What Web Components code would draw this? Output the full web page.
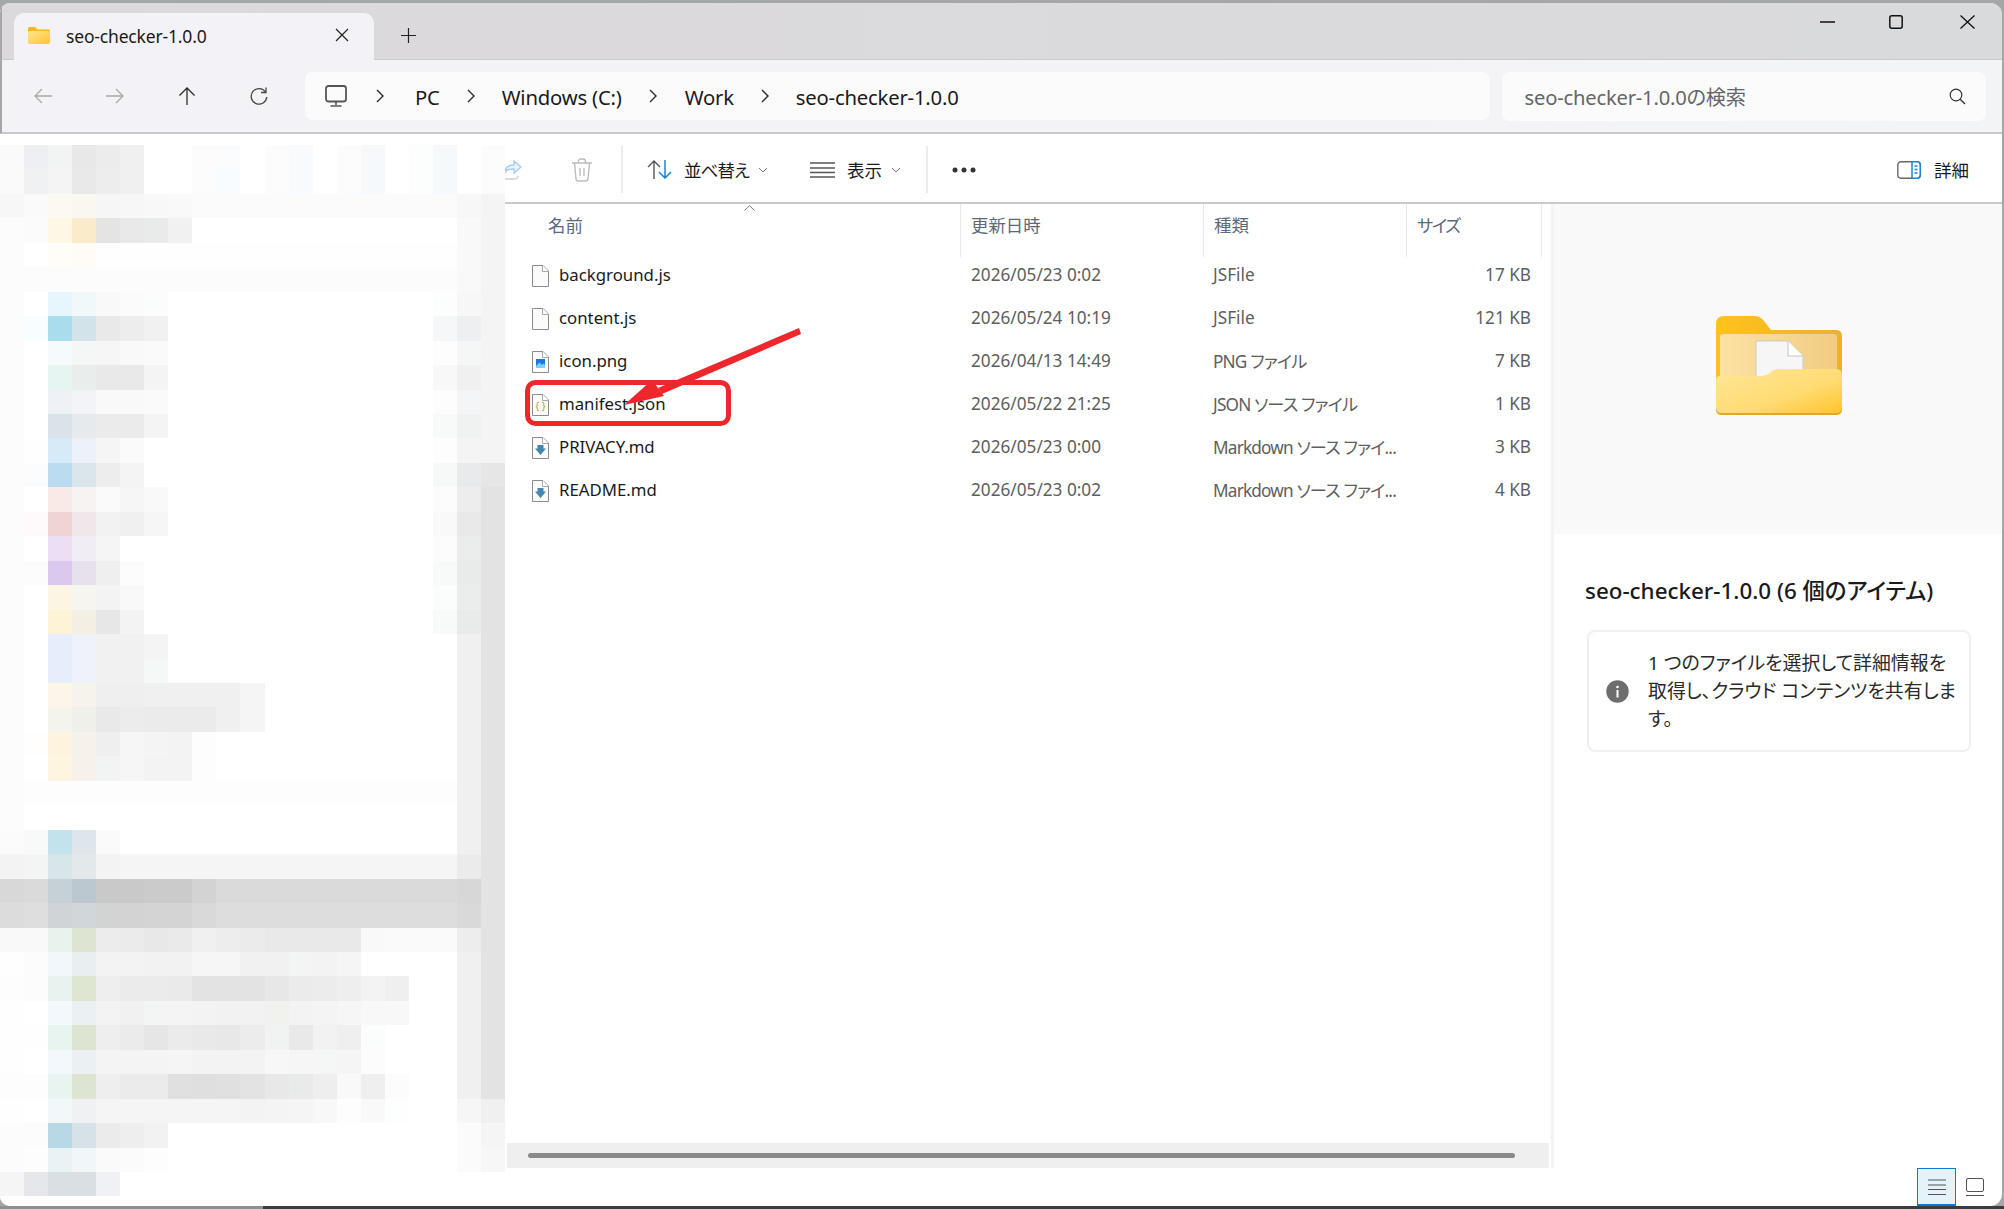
<!DOCTYPE html>
<html lang="ja">
<head>
<meta charset="utf-8">
<title>seo-checker-1.0.0</title>
<style>
html, body { margin: 0; height: 100%; }
body {
  width: 2004px; height: 1209px; overflow: hidden; background: #a4a6a8;
  font-family: "Noto Sans", "Noto Sans CJK JP", sans-serif;
  font-feature-settings: "palt";
  color: #1a1a1a;
}
</style>
</head>
<body>
<fx-window>
  <fx-titlebar slot="title">seo-checker-1.0.0</fx-titlebar>
  <fx-navbar slot="nav"></fx-navbar>
  <fx-mosaic slot="side"></fx-mosaic>
  <fx-toolbar slot="tools"></fx-toolbar>
  <fx-filelist slot="list">
    <fx-file icon="doc" date="2026/05/23 0:02" kind="JSFile" size="17 KB">background.js</fx-file>
    <fx-file icon="doc" date="2026/05/24 10:19" kind="JSFile" size="121 KB">content.js</fx-file>
    <fx-file icon="png" date="2026/04/13 14:49" kind="PNG ファイル" size="7 KB">icon.png</fx-file>
    <fx-file icon="json" date="2026/05/22 21:25" kind="JSON ソース ファイル" size="1 KB">manifest.json</fx-file>
    <fx-file icon="md" date="2026/05/23 0:00" kind="Markdown ソース ファイ..." size="3 KB">PRIVACY.md</fx-file>
    <fx-file icon="md" date="2026/05/23 0:02" kind="Markdown ソース ファイ..." size="4 KB">README.md</fx-file>
  </fx-filelist>
  <fx-details slot="details"></fx-details>
  <fx-viewswitch slot="status"></fx-viewswitch>
</fx-window>
<fx-deskstrip></fx-deskstrip>
<fx-annotation></fx-annotation>

<script>
const FOLDER_SMALL = `<svg width="22" height="17" viewBox="0 0 22 17">
  <defs><linearGradient id="fs" x1="0" y1="0" x2="1" y2="1"><stop offset="0" stop-color="#ffe58f"/><stop offset="1" stop-color="#fdc52f"/></linearGradient></defs>
  <path d="M0 2Q0 0 2 0H7L9.5 2.5H21Q22 2.5 22 4V8H0Z" fill="#f6b622"/>
  <path d="M0 5.5Q0 4 1.5 4H20.5Q22 4 22 5.5V15Q22 17 20 17H2Q0 17 0 15Z" fill="url(#fs)"/>
</svg>`

class FxWindow extends HTMLElement {
  constructor(){
    super()
    this.attachShadow({mode: 'open'})
    this.shadowRoot.innerHTML = `
    <style>
      :host{ display:flex; flex-direction:column; width:2002px; height:1203px; margin-top:3px; background:#fff; border-radius:10px 12px 12px 10px; overflow:hidden; }
      .work{ flex:1; display:flex; min-height:0; }
      .side{ width:505px; flex:none; background:#fff; padding-top:11px; box-sizing:border-box; }
      .main{ flex:1; min-width:0; display:flex; flex-direction:column; }
      .panes{ flex:1; min-height:0; display:flex; }
    </style>
    <slot name="title"></slot>
    <slot name="nav"></slot>
    <div class="work">
      <div class="side"><slot name="side"></slot></div>
      <div class="main">
        <slot name="tools"></slot>
        <div class="panes"><slot name="list"></slot><slot name="details"></slot></div>
        <slot name="status"></slot>
      </div>
    </div>`
  }
}

class FxTitlebar extends HTMLElement {
  constructor(){
    super()
    this.attachShadow({mode: 'open'})
    this.shadowRoot.innerHTML = `
    <style>
      :host{ display:flex; align-items:flex-end; height:57px; box-sizing:border-box; border-left:2px solid #a6a6a6; border-bottom:1px solid #c9c9cb; background:linear-gradient(90deg,#dcd9dd,#d9dadb); padding-left:12px; padding-right:27px; }
      .tab{ display:flex; align-items:center; width:360px; height:47px; margin-bottom:-1px; background:#f3f2f6; border-radius:10px 10px 0 0; padding:0 25px 2px 14px; box-sizing:border-box; }
      .tab svg:first-child{ flex:none; }
      .label{ margin-left:16px; font-size:17.5px; letter-spacing:-.17px; padding-top:1px; }
      .close{ margin-left:auto; margin-bottom:2px; }
      .plus{ margin:0 0 16px 27px; }
      .ctl{ margin-left:auto; align-self:flex-start; margin-top:12px; display:flex; align-items:center; }
    </style>
    <div class="tab">
      ${FOLDER_SMALL}
      <span class="label"><slot></slot></span>
      <svg class="close" width="14" height="14" viewBox="0 0 14 14"><path d="M1 1 13 13M13 1 1 13" stroke="#222" stroke-width="1.2"/></svg>
    </div>
    <svg class="plus" width="15" height="15" viewBox="0 0 15 15"><path d="M7.5 0V15M0 7.5H15" stroke="#222" stroke-width="1.2"/></svg>
    <div class="ctl">
      <svg width="15" height="14" viewBox="0 0 15 14"><path d="M0 7H15" stroke="#111" stroke-width="1.3"/></svg>
      <svg style="margin-left:54px" width="14" height="14" viewBox="0 0 14 14"><rect x=".8" y=".8" width="12.4" height="12.4" rx="2" fill="none" stroke="#111" stroke-width="1.5"/></svg>
      <svg style="margin-left:57px" width="15" height="14" viewBox="0 0 15 14"><path d="M.5 .5 14.5 13.5M14.5 .5 .5 13.5" stroke="#111" stroke-width="1.3"/></svg>
    </div>`
  }
}

class FxNavbar extends HTMLElement {
  constructor(){
    super()
    this.attachShadow({mode: 'open'})
    const chev = `<svg class="chev" width="8" height="14" viewBox="0 0 8 14"><path d="M1 1 7 7 1 13" fill="none" stroke="#2a2a2a" stroke-width="1.4"/></svg>`
    this.shadowRoot.innerHTML = `
    <style>
      :host{ display:flex; align-items:center; height:74px; box-sizing:border-box; border-left:2px solid #a6a6a6; border-bottom:2px solid #c9c8cc; background:linear-gradient(90deg,#f3f2f6,#f3f4f5); padding-left:5px; }
      .btn{ width:72px; display:flex; justify-content:center; align-items:center; }
      .addr{ margin-left:9.5px; width:1185px; height:48px; background:#fbfbfb; border-radius:8px; display:flex; align-items:center; padding-left:20.5px; box-sizing:border-box; font-size:20.3px; letter-spacing:-.2px; }
      .addr span{ margin-left:28px; padding-top:2px; }
      .addr .chev{ margin-left:27px; }
      .addr .c1{ margin-left:29px; }
      .addr .pc{ margin-left:31px; }
      .addr .drive{ margin-left:27px; }
      .addr .leaf{ margin-left:27px; }
      .search{ margin-left:12.5px; width:484px; height:49px; background:#fbfbfb; border-radius:8px; display:flex; align-items:center; justify-content:space-between; padding:0 20px 0 22.5px; box-sizing:border-box; font-size:20.2px; letter-spacing:-.2px; color:#666; }
      .search span{ padding-top:1px; }
    </style>
    <div class="btn"><svg width="18" height="16" viewBox="0 0 18 16"><path d="M18 8H1M8 1 1 8 8 15" fill="none" stroke="#a9a9a9" stroke-width="1.3"/></svg></div>
    <div class="btn"><svg width="18" height="16" viewBox="0 0 18 16"><path d="M0 8H17M10 1 17 8 10 15" fill="none" stroke="#a9a9a9" stroke-width="1.3"/></svg></div>
    <div class="btn"><svg width="18" height="18" viewBox="0 0 18 18"><path d="M9 18V1M1.500 8.500 9 1 16.500 8.500" fill="none" stroke="#2b2b2b" stroke-width="1.3"/></svg></div>
    <div class="btn"><svg width="18" height="18" viewBox="0 0 18 18"><path d="M15.500 5A7.800 7.800 0 1 0 16.800 10" fill="none" stroke="#444" stroke-width="1.300"/><path d="M16 .5V5.500H11" fill="none" stroke="#444" stroke-width="1.300"/></svg></div>
    <div class="addr">
      <svg width="22" height="22" viewBox="0 0 22 22"><rect x="1" y="1" width="20" height="15.500" rx="2.500" fill="none" stroke="#555" stroke-width="1.800"/><path d="M11 17V20M5.500 21H16.500" stroke="#555" stroke-width="1.600"/></svg>
      ${chev.replace('class="chev"', 'class="chev c1"')}<span class="pc">PC</span>${chev}<span class="drive">Windows (C:)</span>${chev}<span>Work</span>${chev}<span class="leaf">seo-checker-1.0.0</span>
    </div>
    <div class="search">
      <span>seo-checker-1.0.0の検索</span>
      <svg width="17" height="17" viewBox="0 0 17 17"><circle cx="7" cy="7" r="5.800" fill="none" stroke="#333" stroke-width="1.200"/><path d="M11.200 11.200 16 16" stroke="#333" stroke-width="1.400"/></svg>
    </div>`
  }
}

// sidebar is blurred in the source: one flat colour per block
const MOSAIC_ROWS = [
  "fafafa eeeff2 f2f3f3 e8e8e8 ececec f0f0f0 fff fff fcfcfd fbfcfe fff fcfcfc f8fbfe fff fcfcfc f6f9fc fff fcfdfd|f6f9fc fff fcfcfc",
  "fafafa f0f1f3 f3f4f3 e9e9e9 ededed f0f0f0 fff fff fcfcfd f9fcfe fff fcfcfc f8fbfe fff fcfcfc f6f9fc fff fcfdfd|f6f9fc fff fcfcfc",
  "f7f7f7 fafafa fbf9f2 f9f7ef f6f6f6 f7f7f7 f8f8f8 f9f9f9 fbfbfb*11|f7f7f7 f4f4f4",
  "fcfcfc fbfbfb fff7e5 faeccb e4e4e3 e9e9e9 e9eaea f0f1f0|f9f9f9 f4f4f4",
  "fcfcfc fff fffdf8 fffcf7 fefefe*15|f9f9f9 f4f4f4",
  "fcfcfc*19|f9f9f9 f4f4f4",
  "fcfcfc fff e6f6fc f1f8f9 f9f9f9 fbfbfb fbfcfc|fcfdfd f7f7f7 f4f4f4",
  "fcfcfc f8feff a9dcec d2e4ea e9e9e9 ededed f1f1f1|f6f7f9 eeeff1 f4f4f4",
  "fcfcfc fff f5fbfd f5f7f7 f6f6f6 f9f9f9 fafafa|fdfdfd f5f7f6 f4f4f4",
  "fcfcfc fff e5f6f2 e9eeec e9e9e9 e9e9e9 f4f4f4|f8f8f8 f0f0f0 f4f4f4",
  "fcfcfc fff eef2f6 f3f4f7 f9f9f9 f9f9f9 fafafa|fdfdfd f4f5f6 f4f4f4",
  "fcfcfc fff dae2ea e6eaed ebebeb ebebeb f3f4f3|f8f9f9 f0f1f1 f4f4f4",
  "fcfcfc fefefe d6eaf8 ecf2f7 f5f5f5 fafafa|fdfdfd f4f4f4 f4f4f4",
  "fcfcfc fafcfe bbdcf0 dae6ec ededed f4f4f4|f7f9f9 e9eaeb e6e6e6",
  "fcfcfc fff f9eae8 f7f3f3 fafafa f6f6f6 f9f9f9|fcfcfc ecedec e3e3e3",
  "fcfcfc fef9fb f0d3d5 f1e6ea f2f2f2 f0f0f0 f6f6f6|f9f9f9 e8e9e8 e3e3e3",
  "fcfcfc fff eadff5 f0edf5 f5f5f5|fcfcfc ebecec e3e3e3",
  "fcfcfc fcfcfc dbc8ee e7e1ee efefef fcfcfc|f8f9f9 e9ebeb e3e3e3",
  "fcfcfc fff fdf5e4 f6f5ef f3f3f3 f9f9f9|fbfcfc ebedec e3e3e3",
  "fcfcfc fff fef3d6 f3efe2 e7e7e7 f3f3f3|f8f9f9 e9ebeb e3e3e3",
  "fcfcfc fff e7eefb eff2f8 f1f1f1 f1f1f1 f4f4f4|f0f0f0 e3e3e3",
  "fcfcfc fff e7eefb eff2f8 f1f1f1 f1f1f1 f4f8f6|f0f0f0 e3e3e3",
  "fcfcfc fff fdf6e8 f5f3ec efefef efefef f0f0f0 f0f0f0 f0f0f0 f0f0f0 f5f5f5|f0f0f0 e3e3e3",
  "fcfcfc fff f3f5ec f0f0ea e9e9e9 ececec ebebeb ebebeb ebebeb f0f0f0 f5f5f5|f0f0f0 e3e3e3",
  "fcfcfc fffefc fdf3de f6f1ea efefef f6f6f6 f4f4f4 f3f3f3 fdfdfd|f0f0f0 e3e3e3",
  "fcfcfc fff fdf5df f6f1ea f2f4f3 f6f6f6 f3f3f3 f3f3f3 fdfdfd|f0f0f0 e3e3e3",
  "fcfcfc fdfdfd*18|f0f0f0 e3e3e3",
  "fcfcfc|f0f0f0 e3e3e3",
  "fbfbfb f8faf9 c2e2ec dee6ec fafafa|f0f0f0 e3e3e3",
  "f3f3f3 f3f5f4 d6e6eb e3e8eb f3f3f3 f5f5f5*14|ebebeb e3e3e3",
  "d8d8d8 dadada c5d0d7 bbc8d0 c8c9c8 c9c9c9 cbcbcb cbcbcb d3d3d3 dadada*10|d7d7d7 e3e3e3",
  "dcdcdc dedede d0d4d6 d1d6db d2d4d3 d3d3d3 d4d4d4 d4d4d4 d9d9d9 dddddd*10|d9d9d9 e3e3e3",
  "f9f9f9 f9f9f9 e8f3ed dde4d2 ececec ebebeb e8e8e8 eaeaea f0f0f0 ededed ebebeb e9e9e9 e9e9e9 e9e9e9 e9e9e9 f9f9f9 fafafa fafafa fafafa|ededed e3e3e3",
  "fefefe fcfcfc f1f7fa e9eef0 f3f3f3 f3f3f3 f2f2f2 f2f2f2 f6f6f6 f6f6f6 f1f1f1 f1f1f1 f2f5f3 f3f3f3 f5f5f5|f0f0f0 e3e3e3",
  "fdfdfd fcfcfc e8f3ef dee5d1 eeeeee ebebeb ebebeb eaeaea e3e3e3 e3e3e3 e3e3e3 e7e7e7 ebebeb ececec eeeeee f3f3f3 efefef|f0f0f0 e3e3e3",
  "fefefe fff f2f8fb ebf0f2 f3f3f3 f1f1f1 f3f4f4 f4f4f4 f3f3f3 f2f2f2 f2f2f2 f1f1ee f3f3f3 f4f4f4 f6f6f6 f8f8f8 f8f8f8|f0f0f0 e3e3e3",
  "fefefe fefefe e8f4ef dde4d2 eeeeee ebebeb e6e6e6 ebebeb e9e9e9 e8e8e8 ececec f1f3f2 e9e9e9 f2f2f2 efefef fbfdfc|f0f0f0 e3e3e3",
  "fefefe fff f2f8fb ebf0f2 f4f4f4 f4f4f4 f4f4f4 f5f5f5 f3f3f3 f3f3f3 f3f3f3 f7f7f7 f6f6f6 f5f7f6 f5f5f5 fcfcfc|f0f0f0 e3e3e3",
  "fdfdfd fdfdfd e8f4ef dde4d2 eeeeee ebebeb ebebeb e0e0e0 dfdfdf e0e0e0 e3e3e3 e8e8e8 e8ebea eeeeee f9f9f9 efefef fcfcfc|f0f0f0 e3e3e3",
  "fefefe fff f2f8fa f0f1f3 f5f5f5 f5f5f5 f5f5f5 f5f5f5 f5f5f5 f5f5f5 f3f3f3 f4f4f4 f5f5f5 f8f8f8 fdfdfd f9f9f9 fdfefe|f6f6f6 f0f0f0",
  "fcfcfc fbfcfb b7d8e4 d7e2e8 ebebeb eeeeee f2f2f2|fbfbfb f5f5f5",
  "fcfcfc fdfdfd e9f2f5 f1f6f9 fafafa fbfbfb fdfdfd|fbfbfb f7f7f7",
  "f5f5f5 e6e7eb dadfe3 dadfe3 f0f1f5|"
]

class FxMosaic extends HTMLElement {
  constructor(){
    super()
    this.attachShadow({mode: 'open'})
    let cells = ""
    for(const row of MOSAIC_ROWS){
      for(const c of this.expandRow(row)) cells += `<i style="background:#${c}"></i>`
    }
    this.shadowRoot.innerHTML = `
    <style>
      :host{ display:grid; grid-template-columns:repeat(21,24.05px); grid-auto-rows:24.46px; }
    </style>${cells}`
  }

  expandRow(row){
    const parts = row.split("|")
    const spread = s => s.trim() === "" ? [] : s.trim().split(/\s+/).flatMap(t => {
      const [c, n] = t.split("*")
      return Array(Number(n || 1)).fill(c)
    })
    const left = spread(parts[0])
    const right = spread(parts[1] || "")
    const mid = Array(21 - left.length - right.length).fill("fff")
    return [...left, ...mid, ...right]
  }
}

class FxToolbar extends HTMLElement {
  constructor(){
    super()
    this.attachShadow({mode: 'open'})
    const caret = `<svg width="10" height="6" viewBox="0 0 10 6"><path d="M1 1 5 5 9 1" fill="none" stroke="#777" stroke-width="1"/></svg>`
    this.shadowRoot.innerHTML = `
    <style>
      :host{ display:flex; align-items:center; height:70px; padding-top:3px; box-sizing:border-box; border-bottom:2px solid #c9c9cb; font-size:17.5px; padding-right:33px; overflow:hidden; }
      .sep{ width:2px; height:47px; background:#ebebeb; flex:none; }
      .right{ margin-left:auto; display:flex; align-items:center; gap:13px; }
    </style>
    <svg style="flex:none" width="17" height="21" viewBox="0 0 17 21"><path d="M-2 13H2M-2 20H9Q13 20 13 17" fill="none" stroke="#cfcfcf" stroke-width="1.300"/><path d="M0 12Q1 6 9 6V2L16 8 9 14V10Q3 10 0 12Z" fill="#e9f3fc" stroke="#a3cdf1" stroke-width="1.300"/></svg>
    <svg style="margin-left:49px;flex:none" width="22" height="24" viewBox="0 0 22 24"><path d="M1 5H21M7.500 5V3.500Q7.500 1 10 1H12Q14.500 1 14.500 3.500V5M3.500 5 5 21Q5.200 23 7.500 23H14.500Q16.800 23 17 21L18.500 5M9 10V18M13 10V18" fill="none" stroke="#bcbcbc" stroke-width="1.400"/></svg>
    <div class="sep" style="margin-left:28px"></div>
    <svg style="margin-left:24px;flex:none" width="25" height="19" viewBox="0 0 25 19"><path d="M7 19V1M1 7 7 1 13 7" fill="none" stroke="#555" stroke-width="1.400"/><path d="M18 0V18M12 12 18 18 24 12" fill="none" stroke="#1a84d8" stroke-width="1.500"/></svg>
    <span style="margin-left:12px;width:65px;white-space:nowrap;letter-spacing:-.9px">並べ替え</span>
    <span style="margin-left:9px;display:flex">${caret}</span>
    <svg style="margin-left:42px;flex:none" width="25" height="16" viewBox="0 0 25 16"><path d="M0 1H25M0 6H25M0 10.500H25M0 15H25" stroke="#555" stroke-width="1.300"/></svg>
    <span style="margin-left:12px;width:35px;white-space:nowrap">表示</span>
    <span style="margin-left:9px;display:flex">${caret}</span>
    <div class="sep" style="margin-left:25px"></div>
    <svg style="margin-left:24px;flex:none" width="24" height="6" viewBox="0 0 24 6"><circle cx="3" cy="3" r="2.500" fill="#333"/><circle cx="12" cy="3" r="2.500" fill="#333"/><circle cx="21" cy="3" r="2.500" fill="#333"/></svg>
    <div class="right">
      <svg width="24" height="18" viewBox="0 0 24 18"><rect x=".8" y=".8" width="22.400" height="16.400" rx="3" fill="#fff" stroke="#666" stroke-width="1.400"/><path d="M15 .8H20Q23.200 .8 23.200 4V14Q23.200 17.200 20 17.200H15Z" fill="#fff" stroke="#1a84d8" stroke-width="1.500"/><path d="M17.500 5H20.500M17.500 8.500H20.500M17.500 12H20.500" stroke="#1a84d8" stroke-width="1.300"/></svg>
      <span>詳細</span>
    </div>`
  }
}

class FxFilelist extends HTMLElement {
  constructor(){
    super()
    this.attachShadow({mode: 'open'})
    this.shadowRoot.innerHTML = `
    <style>
      :host{ display:flex; flex-direction:column; width:1046px; height:100%; box-sizing:border-box; }
      .head{ display:grid; grid-template-columns:456px 243px 203px 135px; height:53px; margin-bottom:-3px; font-size:17.4px; color:#5a6a7d; }
      .head div{ border-right:1px solid #e8e8e8; padding:7.5px 0 0 10px; position:relative; }
      .head div:first-child{ padding-left:43px; }
      .head div:last-child{ letter-spacing:-1.6px; }
      .head svg{ position:absolute; left:239px; top:1px; }
      .rows{ flex:1; }
      .bar{ height:25px; margin:0 2px; background:#efefef; display:flex; align-items:center; padding:0 34px 0 21px; }
      .thumb{ flex:1; height:5px; border-radius:3px; background:#8a8a8a; }
    </style>
    <div class="head">
      <div>名前<svg width="11" height="6" viewBox="0 0 11 6"><path d="M.5 5.500 5.500 .7 10.500 5.500" fill="none" stroke="#777" stroke-width="1"/></svg></div>
      <div>更新日時</div><div>種類</div><div>サイズ</div>
    </div>
    <div class="rows"><slot></slot></div>
    <div class="bar"><div class="thumb"></div></div>`
  }
}

const PAGE = `<path d="M.5 .5H11L16.500 6V21.500H.5Z" fill="#fbfbfb" stroke="#8c8c8c"/><path d="M10.500 .5V6.500H16.500" fill="#fff" stroke="#a8a8a8"/>`
const FILE_ICONS = {
  doc: PAGE,
  png: PAGE + `<rect x="4" y="8" width="9" height="9" fill="#1b78dc"/><path d="M4 15 7.500 11.500 10 14 11.500 12.500 13 14V17H4Z" fill="#7fd0f5"/>`,
  json: PAGE + `<path d="M7 8.500H6.200Q5.200 8.500 5.200 9.500V11.500L4.200 12.500 5.200 13.500V15.500Q5.200 16.500 6.200 16.500H7M10 8.500H10.800Q11.800 8.500 11.800 9.500V11.500L12.800 12.500 11.800 13.500V15.500Q11.800 16.500 10.800 16.500H10" fill="none" stroke="#b5b94f" stroke-width="1.100"/>`,
  md: PAGE + `<path d="M5.500 8H11.500V11.500H14L8.500 18 3 11.500H5.500Z" fill="#4587ae"/>`
}

class FxFile extends HTMLElement {
  constructor(){
    super()
    this.attachShadow({mode: 'open'})
  }
  connectedCallback(){
    const kind = this.getAttribute("kind")
    // kana in the reference font run narrower than Noto's
    const kindClass = /^[\x00-\x7f]*$/.test(kind) ? "kind" : "kind jp"
    this.shadowRoot.innerHTML = `
    <style>
      :host{ display:grid; grid-template-columns:456px 243px 203px 135px; height:43px; align-items:center; font-size:17.2px; color:#5e5e5e; }
      .name{ display:flex; align-items:center; padding-left:27px; color:#1a1a1a; font-size:16.8px; }
      .name svg{ margin-right:10px; flex:none; }
      .name span{ margin-top:-3px; }
      .date, .kind, .size{ margin-top:-2px; }
      .date, .kind{ padding-left:10px; white-space:nowrap; }
      .kind{ padding-left:9px; }
      .jp{ letter-spacing:-.8px; margin-top:-3px; }
      .size{ text-align:right; padding-right:11px; }
    </style>
    <div class="name"><svg width="17" height="22" viewBox="0 0 17 22">${FILE_ICONS[this.getAttribute("icon")]}</svg><span><slot></slot></span></div>
    <div class="date">${this.getAttribute("date")}</div>
    <div class="${kindClass}">${kind}</div>
    <div class="size">${this.getAttribute("size")}</div>`
  }
}

class FxDetails extends HTMLElement {
  constructor(){
    super()
    this.attachShadow({mode: 'open'})
    this.shadowRoot.innerHTML = `
    <style>
      :host{ display:block; width:451px; height:100%; box-sizing:border-box; border-left:3px solid #f3f3f3; }
      .preview{ height:330px; background:#f9f9f9; display:flex; align-items:center; justify-content:center; padding:0 0 7px 1px; box-sizing:border-box; }
      h2{ margin:43px 0 0 31px; font-size:22.4px; line-height:28px; font-weight:500; letter-spacing:0; white-space:nowrap; }
      .card{ display:flex; align-items:center; margin:25px 0 0 33px; width:384px; height:122px; box-sizing:border-box; border:2px solid #f0f0f0; border-radius:8px; padding-left:17px; }
      .card svg{ flex:none; }
      p{ margin:0 0 0 19px; width:313px; flex:none; font-size:18.9px; line-height:28px; color:#2a2a2a; }
    </style>
    <div class="preview">
      <svg width="126" height="99" viewBox="0 0 126 99">
        <defs>
          <linearGradient id="bk" x1="0" y1="0" x2="1" y2="0"><stop offset="0" stop-color="#ffc21c"/><stop offset="1" stop-color="#eeb02f"/></linearGradient>
          <linearGradient id="in" x1="0" y1="0" x2="1" y2="0"><stop offset="0" stop-color="#fde2a3"/><stop offset="1" stop-color="#f0cc82"/></linearGradient>
          <linearGradient id="fr" x1="0" y1="0" x2="1" y2="1"><stop offset="0" stop-color="#ffe697"/><stop offset=".6" stop-color="#ffdb72"/><stop offset="1" stop-color="#ffc42a"/></linearGradient>
        </defs>
        <path d="M0 8Q0 0 8 0H38Q44 0 48 5L55 14H120Q126 14 126 20V70H0Z" fill="url(#bk)"/>
        <rect x="4" y="18" width="117" height="48" rx="3" fill="url(#in)"/>
        <path d="M40 25H72L87 40V64H40Z" fill="#f6f6f6" stroke="#c9c9c9"/>
        <path d="M72 25V40H87" fill="#fff" stroke="#c4c4c4"/>
        <path d="M0 65Q0 61 4 61H46Q50 61 54 58Q58 54 62 54H120Q126 54 126 60V93Q126 99 120 99H6Q0 99 0 93Z" fill="#e3a52e"/>
        <path d="M0 64Q0 60 4 60H46Q50 60 54 57Q58 53 62 53H120Q126 53 126 59V91Q126 97 120 97H6Q0 97 0 91Z" fill="url(#fr)"/>
      </svg>
    </div>
    <h2>seo-checker-1.0.0 (6 個のアイテム)</h2>
    <div class="card">
      <svg width="23" height="23" viewBox="0 0 23 23"><circle cx="11.500" cy="11.500" r="11.200" fill="#6d6d6d"/><rect x="10.500" y="10" width="2" height="7.500" fill="#fff"/><circle cx="11.500" cy="7" r="1.300" fill="#fff"/></svg>
      <p>1 つのファイルを選択して詳細情報を取得し、クラウド コンテンツを共有します。</p>
    </div>`
  }
}

class FxViewswitch extends HTMLElement {
  constructor(){
    super()
    this.attachShadow({mode: 'open'})
    this.shadowRoot.innerHTML = `
    <style>
      :host{ display:flex; justify-content:flex-end; height:38px; padding-right:8px; }
      .on{ width:39px; height:38px; box-sizing:border-box; background:#e4f2fa; border:1px solid #0f78d4; border-bottom-width:2px; display:flex; align-items:center; justify-content:center; }
      .off{ width:38px; display:flex; align-items:center; justify-content:center; }
    </style>
    <div class="on"><svg width="18" height="16" viewBox="0 0 18 16"><path d="M0 1H18M0 6H18M0 10.500H18M0 15.500H18" stroke="#555" stroke-width="1"/></svg></div>
    <div class="off"><svg width="18" height="18" viewBox="0 0 18 18"><rect x=".5" y=".5" width="17" height="13" rx="1.500" fill="none" stroke="#555"/><path d="M0 17.500H18" stroke="#555"/></svg></div>`
  }
}

class FxDeskstrip extends HTMLElement {
  constructor(){
    super()
    this.attachShadow({mode: 'open'})
    this.shadowRoot.innerHTML = `<style>:host{ display:block; height:3px; background:linear-gradient(90deg,#8f8f8f 263px,#3c3c3c 263px); }</style>`
  }
}

// the red marks are drawn over the screenshot by whoever annotated it
class FxAnnotation extends HTMLElement {
  constructor(){
    super()
    this.attachShadow({mode: 'open'})
    this.shadowRoot.innerHTML = `
    <style>
      :host{ position:absolute; left:520px; top:325px; width:290px; height:110px; pointer-events:none; }
      svg{ display:block; }
    </style>
    <svg width="290" height="110" viewBox="520 325 290 110">
      <rect x="527.500" y="382.500" width="201" height="41" rx="8" fill="none" stroke="#ee272c" stroke-width="5"/>
      <path d="M799 328 658 388 662 394 801 334Z" fill="#ee272c"/>
      <path d="M624 405 652 380 664 396Z" fill="#ee272c"/>
    </svg>`
  }
}

window.customElements.define('fx-window', FxWindow)
window.customElements.define('fx-titlebar', FxTitlebar)
window.customElements.define('fx-navbar', FxNavbar)
window.customElements.define('fx-mosaic', FxMosaic)
window.customElements.define('fx-toolbar', FxToolbar)
window.customElements.define('fx-filelist', FxFilelist)
window.customElements.define('fx-file', FxFile)
window.customElements.define('fx-details', FxDetails)
window.customElements.define('fx-viewswitch', FxViewswitch)
window.customElements.define('fx-deskstrip', FxDeskstrip)
window.customElements.define('fx-annotation', FxAnnotation)
</script>
</body>
</html>
